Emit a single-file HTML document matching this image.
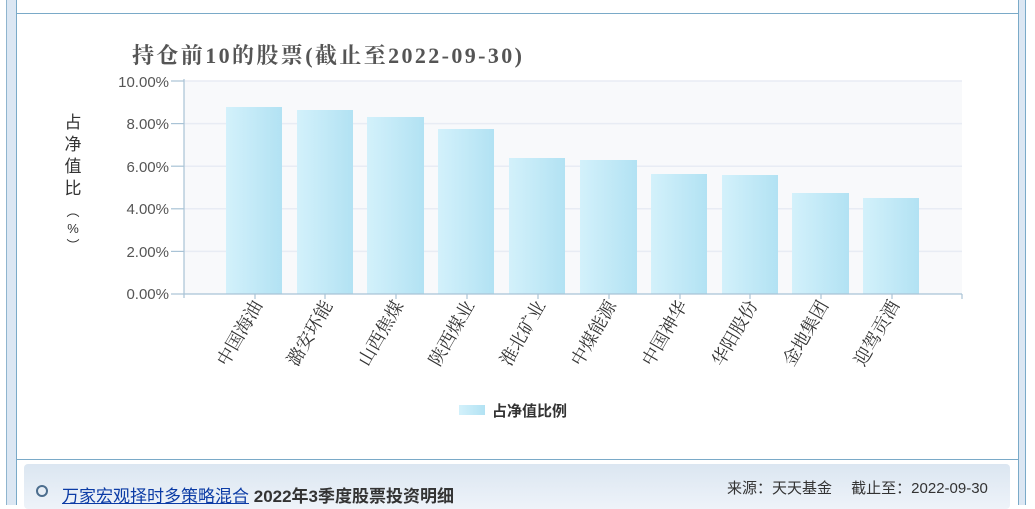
<!DOCTYPE html>
<html><head><meta charset="utf-8"><style>
body{margin:0;width:1035px;height:505px;overflow:hidden;background:#fff;position:relative;font-family:"Liberation Sans","Noto Sans CJK SC",sans-serif}
.strip{position:absolute;top:0;bottom:0;background:#dce7f3}
</style></head><body>
<div class="strip" style="left:6px;width:9px;border-left:1px solid #8fb5cf;border-right:1px solid #7aaac8"></div>
<div class="strip" style="left:1018px;width:6px;border-left:1px solid #7aaac8;border-right:1px solid #7aaac8"></div>
<div style="position:absolute;left:16px;width:1002px;top:13px;height:1px;background:#7aaac8"></div>
<div style="position:absolute;left:16px;width:1002px;top:459px;height:1px;background:#7aaac8"></div>
<div style="position:absolute;left:24px;width:986px;top:464px;height:45px;border-radius:4px;background:linear-gradient(#dbe6f1,#eef3f9)"></div>
<div style="position:absolute;left:36px;top:485px;width:8px;height:8px;border:2px solid #4c6e8e;border-radius:50%"></div>
<div style="position:absolute;left:62px;top:482px;font-size:17px;color:#333;white-space:nowrap"><span style="color:#0b3ba5;text-decoration:underline">万家宏观择时多策略混合</span> <b>2022年3季度股票投资明细</b></div>
<div style="position:absolute;left:727px;top:477px;font-size:15px;color:#333;white-space:nowrap">来源：天天基金　 截止至：2022-09-30</div>
<svg width="1035" height="460" style="position:absolute;left:0;top:0" font-family="'Liberation Serif','Noto Serif CJK SC',serif">
<defs><linearGradient id="g" x1="0" x2="1"><stop offset="0" stop-color="#d3f1fb"/><stop offset="1" stop-color="#b2e2f3"/></linearGradient></defs>
<text x="132" y="63" font-size="22" font-weight="bold" fill="#555" textLength="390" lengthAdjust="spacing">持仓前10的股票(截止至2022-09-30)</text>
<rect x="184" y="81" width="778" height="213" fill="#f8f9fb"/>
<g stroke="#e8ecf4" stroke-width="1.5"><line x1="184" x2="962" y1="81" y2="81"/><line x1="184" x2="962" y1="123.6" y2="123.6"/><line x1="184" x2="962" y1="166.2" y2="166.2"/><line x1="184" x2="962" y1="208.8" y2="208.8"/><line x1="184" x2="962" y1="251.4" y2="251.4"/></g>
<g fill="url(#g)">
<rect x="226" y="107" width="56" height="187"/><rect x="297" y="110" width="56" height="184"/><rect x="367" y="117" width="57" height="177"/><rect x="438" y="129" width="56" height="165"/><rect x="509" y="158" width="56" height="136"/><rect x="580" y="160" width="57" height="134"/><rect x="651" y="174" width="56" height="120"/><rect x="722" y="175" width="56" height="119"/><rect x="792" y="193" width="57" height="101"/><rect x="863" y="198" width="56" height="96"/>
</g>
<g stroke="#a9c3d6" stroke-width="1.2"><line x1="184" y1="79" x2="184" y2="298"/><line x1="184" y1="294" x2="962" y2="294"/>
<line x1="171" x2="184" y1="81" y2="81"/><line x1="171" x2="184" y1="123.6" y2="123.6"/><line x1="171" x2="184" y1="166.2" y2="166.2"/><line x1="171" x2="184" y1="208.8" y2="208.8"/><line x1="171" x2="184" y1="251.4" y2="251.4"/><line x1="171" x2="184" y1="294" y2="294"/>
<line x1="255" x2="255" y1="294" y2="299"/><line x1="325" x2="325" y1="294" y2="299"/><line x1="396" x2="396" y1="294" y2="299"/><line x1="467" x2="467" y1="294" y2="299"/><line x1="538" x2="538" y1="294" y2="299"/><line x1="609" x2="609" y1="294" y2="299"/><line x1="680" x2="680" y1="294" y2="299"/><line x1="750" x2="750" y1="294" y2="299"/><line x1="821" x2="821" y1="294" y2="299"/><line x1="892" x2="892" y1="294" y2="299"/><line x1="962" x2="962" y1="294" y2="299"/></g>
<g font-family="'Liberation Sans',sans-serif" font-size="15" fill="#555" text-anchor="end">
<text x="169" y="87">10.00%</text><text x="169" y="129">8.00%</text><text x="169" y="172">6.00%</text><text x="169" y="214">4.00%</text><text x="169" y="257">2.00%</text><text x="169" y="299">0.00%</text></g>
<g font-family="'Liberation Sans','Noto Sans CJK SC',sans-serif" font-size="17" fill="#333" text-anchor="middle">
<text x="73" y="128">占</text><text x="73" y="150">净</text><text x="73" y="172">值</text><text x="73" y="194">比</text><text x="73" y="216" font-size="13">︵</text><text x="73" y="233" font-size="13">%</text><text x="73" y="250" font-size="13">︶</text></g>
<g font-size="18" fill="#333" text-anchor="end">
<text transform="translate(263,305) rotate(-60)">中国海油</text>
<text transform="translate(333,305) rotate(-60)">潞安环能</text>
<text transform="translate(404,305) rotate(-60)">山西焦煤</text>
<text transform="translate(475,305) rotate(-60)">陕西煤业</text>
<text transform="translate(546,305) rotate(-60)">淮北矿业</text>
<text transform="translate(617,305) rotate(-60)">中煤能源</text>
<text transform="translate(688,305) rotate(-60)">中国神华</text>
<text transform="translate(758,305) rotate(-60)">华阳股份</text>
<text transform="translate(829,305) rotate(-60)">金地集团</text>
<text transform="translate(900,305) rotate(-60)">迎驾贡酒</text>
</g>
<rect x="459" y="405" width="26" height="10" fill="url(#g)"/>
<text x="492" y="416" font-family="'Liberation Sans','Noto Sans CJK SC',sans-serif" font-size="15" font-weight="bold" fill="#333">占净值比例</text>
</svg>
</body></html>
